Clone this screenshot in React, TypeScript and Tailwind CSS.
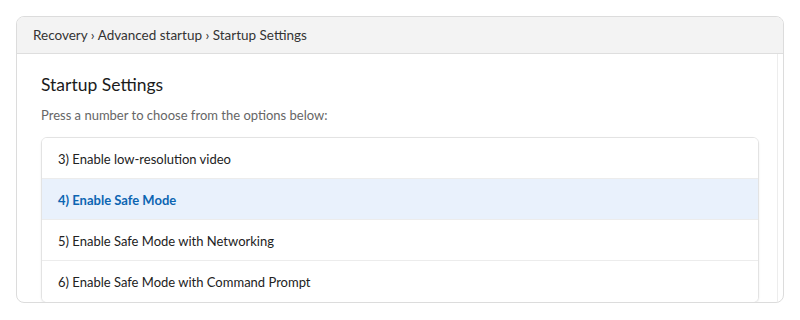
const options = [
  { key: "3", label: "Enable low-resolution video" },
  { key: "4", label: "Enable Safe Mode", active: true },
  { key: "5", label: "Enable Safe Mode with Networking" },
  { key: "6", label: "Enable Safe Mode with Command Prompt" },
];

export default function App() {
  return (
    <div className="w-[800px] h-[320px] bg-white px-4 pt-4 font-['Lato',sans-serif]">
      <div className="h-[287px] border border-[#dcdcdc] rounded-lg overflow-hidden flex flex-col">
        <div className="h-[37px] shrink-0 bg-[#f3f3f3] border-b border-[#dedede] px-4 pt-px flex items-center text-[13.5px] text-[#333333]">
          Recovery › Advanced startup › Startup Settings
        </div>
        <div className="flex-1 mr-[5px] border-r border-[#ededed] pl-6 pr-[18px] pt-[19px]">
          <h1 className="text-[17.5px] leading-6 text-[#1b1b1b]">Startup Settings</h1>
          <p className="mt-[10px] text-[13px] leading-4 text-[#666666]">
            Press a number to choose from the options below:
          </p>
          <div className="mt-[14px] border border-[#e3e3e3] rounded-md overflow-hidden shadow-[0_1px_2px_rgba(0,0,0,0.08)]">
            {options.map((o, i) => (
              <div
                key={o.key}
                className={
                  "h-[41px] px-4 pt-[3px] flex items-center text-[13px] " +
                  (i < options.length - 1 ? "border-b border-[#ececec] " : "") +
                  (o.active ? "bg-[#e9f1fc] text-[#0c65b2] font-bold" : "bg-white text-[#222222]")
                }
              >
                {o.key}) {o.label}
              </div>
            ))}
          </div>
        </div>
      </div>
    </div>
  );
}
